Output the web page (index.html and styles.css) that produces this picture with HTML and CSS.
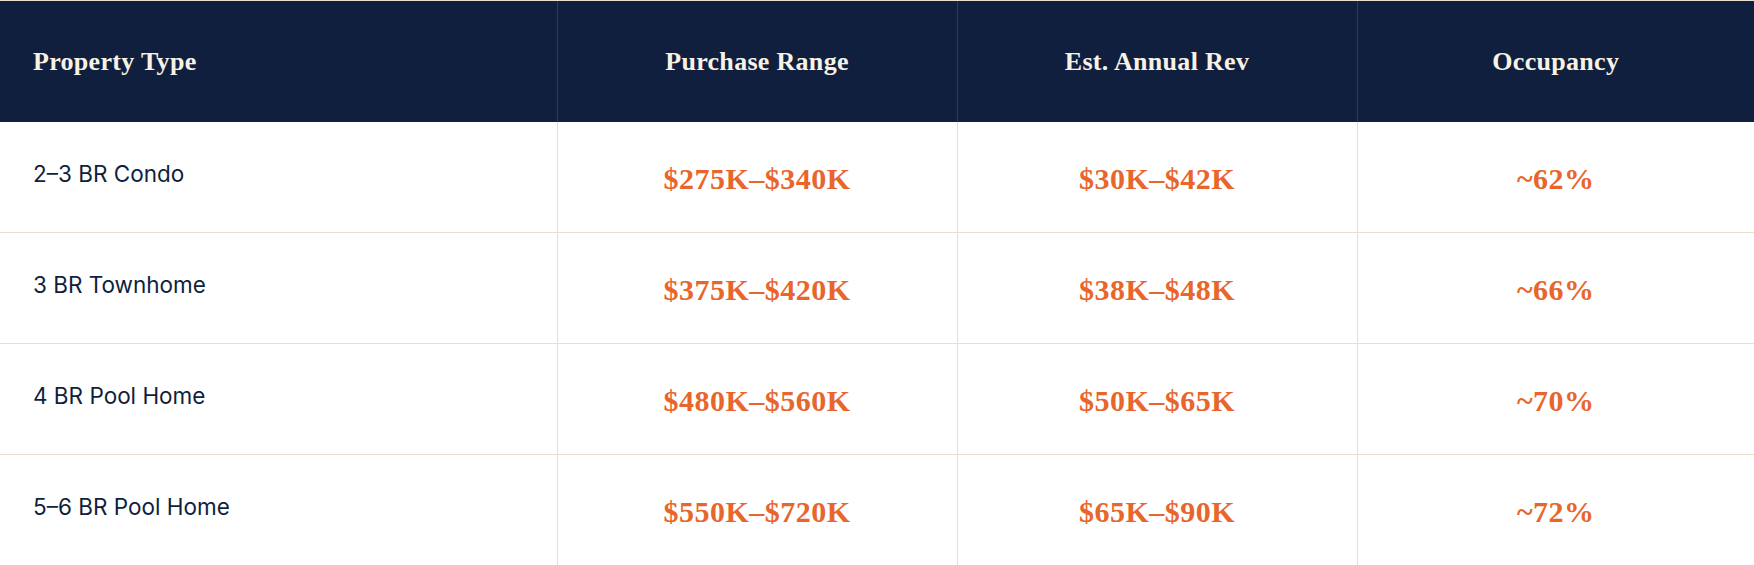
FILE: index.html
```html
<!DOCTYPE html>
<html lang="en">
<head>
<meta charset="utf-8">
<title>Property Types</title>
<link rel="stylesheet" href="styles.css">
</head>
<body>
<div class="wrap">
  <table class="ptable">
    <colgroup>
      <col class="col-type">
      <col class="col-mid">
      <col class="col-mid">
      <col>
    </colgroup>
    <thead>
      <tr>
        <th class="th-left">Property Type</th>
        <th>Purchase Range</th>
        <th>Est. Annual Rev</th>
        <th>Occupancy</th>
      </tr>
    </thead>
    <tbody>
      <tr>
        <td class="name">2–3 BR Condo</td>
        <td class="val">$275K–$340K</td>
        <td class="val">$30K–$42K</td>
        <td class="val">~62%</td>
      </tr>
      <tr>
        <td class="name">3 BR Townhome</td>
        <td class="val">$375K–$420K</td>
        <td class="val">$38K–$48K</td>
        <td class="val">~66%</td>
      </tr>
      <tr>
        <td class="name">4 BR Pool Home</td>
        <td class="val">$480K–$560K</td>
        <td class="val">$50K–$65K</td>
        <td class="val">~70%</td>
      </tr>
      <tr>
        <td class="name">5–6 BR Pool Home</td>
        <td class="val">$550K–$720K</td>
        <td class="val">$65K–$90K</td>
        <td class="val">~72%</td>
      </tr>
    </tbody>
  </table>
</div>
</body>
</html>
```

FILE: styles.css
```css
html, body {
  margin: 0;
  padding: 0;
  background: #ffffff;
}

.wrap {
  border-top: 1px solid #e8dfcf;
}

.ptable {
  width: 100%;
  border-collapse: collapse;
  table-layout: fixed;
}

.col-type { width: 557px; }
.col-mid { width: 400px; }

.ptable thead tr {
  background: #101f3e;
}

.ptable th {
  height: 121px;
  padding: 0 32px;
  box-sizing: border-box;
  font-family: "Liberation Serif", "Times New Roman", serif;
  font-weight: 700;
  font-size: 26px;
  letter-spacing: 0.3px;
  color: #f8f2e6;
  text-align: center;
  vertical-align: middle;
  border-left: 1px solid #2c3b57;
}

.ptable th.th-left {
  text-align: left;
  padding-left: 33px;
  border-left: none;
}

.ptable td {
  border-left: 1px solid #e8dfd1;
  border-top: 1px solid #e8dfd1;
  vertical-align: middle;
}

.ptable tbody tr:first-child td {
  border-top: none;
}

.ptable td.name {
  border-left: none;
  padding: 30px 32px 36px 33px;
  font-family: "Inter", "Noto Sans", sans-serif;
  font-size: 22.5px;
  line-height: 30px;
  color: #101f3e;
}

.ptable td.val {
  padding: 35px 16px 31px;
  text-align: center;
  font-family: "Liberation Serif", "Times New Roman", serif;
  font-weight: 700;
  font-size: 30px;
  line-height: 44px;
  letter-spacing: 0.5px;
  color: #e8662c;
}
```
